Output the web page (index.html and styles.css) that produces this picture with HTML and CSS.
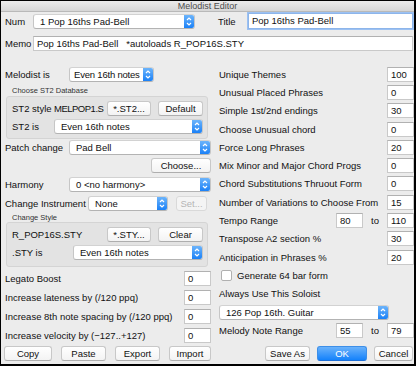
FILE: index.html
```html
<!DOCTYPE html>
<html>
<head>
  <meta charset="UTF-8">
  <title>Melodist Editor</title>
  <link rel="stylesheet" href="styles.css">
</head>
<body>
  <div class="window">
    <div class="titlebar">Melodist Editor</div>
    <div class="content">
      <div class="top-row">
        <span class="label label-num">Num</span>
        <div class="popup popup-num">
          <span class="popup-text">1 Pop 16ths Pad-Bell</span>
          <span class="popup-arrow"><svg width="10" height="13" viewBox="0 0 10 13"><path d="M3 5 L5 3 L7 5 M3 8 L5 10 L7 8" fill="none" stroke="#fff" stroke-width="1.2"/></svg></span>
        </div>
        <span class="label label-title">Title</span>
        <div class="field field-title focused">Pop 16ths Pad-Bell</div>
      </div>
      <div class="memo-row">
        <span class="label label-num">Memo</span>
        <div class="field field-memo">Pop 16ths Pad-Bell&nbsp;&nbsp;&nbsp;*autoloads R_POP16S.STY</div>
      </div>

      <div class="columns">
        <div class="col-left">
          <div class="row row-18">
            <span class="label label-left">Melodist is</span>
            <div class="popup popup-melodist">
              <span class="popup-text">Even 16th notes</span>
              <span class="popup-arrow"><svg width="10" height="13" viewBox="0 0 10 13"><path d="M3 5 L5 3 L7 5 M3 8 L5 10 L7 8" fill="none" stroke="#fff" stroke-width="1.2"/></svg></span>
            </div>
          </div>

          <div class="group-label group-label-first">Choose ST2 Database</div>
          <div class="group group-st2">
            <div class="row row-18">
              <span class="label label-group">ST2 style</span>
              <span class="label value-st2">MELPOP1.S</span>
              <div class="button btn-browse">*.ST2...</div>
              <div class="button btn-default">Default</div>
            </div>
            <div class="row row-18">
              <span class="label label-group">ST2 is</span>
              <div class="popup popup-fill">
                <span class="popup-text">Even 16th notes</span>
                <span class="popup-arrow"><svg width="10" height="13" viewBox="0 0 10 13"><path d="M3 5 L5 3 L7 5 M3 8 L5 10 L7 8" fill="none" stroke="#fff" stroke-width="1.2"/></svg></span>
              </div>
            </div>
          </div>

          <div class="row row-18">
            <span class="label label-left">Patch change</span>
            <div class="popup popup-fill">
              <span class="popup-text">Pad Bell</span>
              <span class="popup-arrow"><svg width="10" height="13" viewBox="0 0 10 13"><path d="M3 5 L5 3 L7 5 M3 8 L5 10 L7 8" fill="none" stroke="#fff" stroke-width="1.2"/></svg></span>
            </div>
          </div>
          <div class="row row-18 row-end">
            <div class="button btn-choose">Choose...</div>
          </div>
          <div class="row row-19">
            <span class="label label-left">Harmony</span>
            <div class="popup popup-fill">
              <span class="popup-text">0 &lt;no harmony&gt;</span>
              <span class="popup-arrow"><svg width="10" height="13" viewBox="0 0 10 13"><path d="M3 5 L5 3 L7 5 M3 8 L5 10 L7 8" fill="none" stroke="#fff" stroke-width="1.2"/></svg></span>
            </div>
          </div>
          <div class="row row-19">
            <span class="label label-instrument">Change Instrument</span>
            <div class="popup popup-instrument">
              <span class="popup-text">None</span>
              <span class="popup-arrow"><svg width="10" height="13" viewBox="0 0 10 13"><path d="M3 5 L5 3 L7 5 M3 8 L5 10 L7 8" fill="none" stroke="#fff" stroke-width="1.2"/></svg></span>
            </div>
            <div class="button btn-set disabled">Set...</div>
          </div>

          <div class="group-label group-label-second">Change Style</div>
          <div class="group group-style">
            <div class="row row-18">
              <span class="label value-style">R_POP16S.STY</span>
              <div class="button btn-browse">*.STY...</div>
              <div class="button btn-default">Clear</div>
            </div>
            <div class="row row-18">
              <span class="label label-sty">.STY is</span>
              <div class="popup popup-fill">
                <span class="popup-text">Even 16th notes</span>
                <span class="popup-arrow"><svg width="10" height="13" viewBox="0 0 10 13"><path d="M3 5 L5 3 L7 5 M3 8 L5 10 L7 8" fill="none" stroke="#fff" stroke-width="1.2"/></svg></span>
              </div>
            </div>
          </div>

          <div class="row row-19 row-after-group">
            <span class="label label-grow">Legato Boost</span>
            <div class="field field-num">0</div>
          </div>
          <div class="row row-19">
            <span class="label label-grow">Increase lateness by (/120 ppq)</span>
            <div class="field field-num">0</div>
          </div>
          <div class="row row-19">
            <span class="label label-grow">Increase 8th note spacing by (/120 ppq)</span>
            <div class="field field-num">0</div>
          </div>
          <div class="row row-19">
            <span class="label label-grow">Increase velocity by (−127..+127)</span>
            <div class="field field-num">0</div>
          </div>
        </div>

        <div class="col-right">
          <div class="row row-r"><span class="label label-grow">Unique Themes</span><div class="field field-num">100</div></div>
          <div class="row row-r"><span class="label label-grow">Unusual Placed Phrases</span><div class="field field-num">0</div></div>
          <div class="row row-r"><span class="label label-grow">Simple 1st/2nd endings</span><div class="field field-num">30</div></div>
          <div class="row row-r"><span class="label label-grow">Choose Unusual chord</span><div class="field field-num">0</div></div>
          <div class="row row-r"><span class="label label-grow">Force Long Phrases</span><div class="field field-num">20</div></div>
          <div class="row row-r"><span class="label label-grow">Mix Minor and Major Chord Progs</span><div class="field field-num">0</div></div>
          <div class="row row-r"><span class="label label-grow">Chord Substitutions Thruout Form</span><div class="field field-num">0</div></div>
          <div class="row row-r"><span class="label label-grow">Number of Variations to Choose From</span><div class="field field-num">15</div></div>
          <div class="row row-r">
            <span class="label label-grow">Tempo Range</span>
            <div class="field field-num">80</div>
            <span class="label label-to">to</span>
            <div class="field field-num">110</div>
          </div>
          <div class="row row-r"><span class="label label-grow">Transpose A2 section %</span><div class="field field-num">30</div></div>
          <div class="row row-r"><span class="label label-grow">Anticipation in Phrases %</span><div class="field field-num">20</div></div>
          <div class="row row-r">
            <span class="checkbox"></span>
            <span class="label">Generate 64 bar form</span>
          </div>
          <div class="row row-r"><span class="label label-grow">Always Use This Soloist</span></div>
          <div class="row row-r">
            <div class="popup popup-soloist">
              <span class="popup-text">126 Pop 16th. Guitar</span>
              <span class="popup-arrow"><svg width="10" height="13" viewBox="0 0 10 13"><path d="M3 5 L5 3 L7 5 M3 8 L5 10 L7 8" fill="none" stroke="#fff" stroke-width="1.2"/></svg></span>
            </div>
          </div>
          <div class="row row-r">
            <span class="label label-grow">Melody Note Range</span>
            <div class="field field-num">55</div>
            <span class="label label-to">to</span>
            <div class="field field-num">79</div>
          </div>
        </div>
      </div>

      <div class="bottom-row">
        <div class="button btn-copy">Copy</div>
        <div class="button btn-paste">Paste</div>
        <div class="button btn-export">Export</div>
        <div class="button btn-import">Import</div>
        <div class="spacer"></div>
        <div class="button btn-saveas">Save As</div>
        <div class="button btn-ok primary">OK</div>
        <div class="button btn-cancel">Cancel</div>
      </div>
    </div>
  </div>
</body>
</html>
```

FILE: styles.css
```css
body {
  margin: 0;
  background-color: #000;
  font-family: "Liberation Sans", Arial, sans-serif;
  font-size: 9.5px;
  color: #111;
}

.window {
  width: 413px;
  height: 363px;
  margin: 1px 2px 2px 1px;
  background-color: #ececec;
  overflow: hidden;
}

.titlebar {
  height: 10px;
  line-height: 10px;
  text-align: center;
  font-size: 9px;
  color: #4d4d4d;
  background: linear-gradient(#ebebeb, #d6d6d6);
  border-bottom: 1px solid #b9b9b9;
}

.content {
  padding: 1px 0 0 4px;
}

.top-row,
.memo-row,
.row,
.bottom-row {
  display: flex;
  align-items: center;
}

.top-row {
  height: 16px;
}

.memo-row {
  height: 16px;
  margin-top: 6px;
}

.label {
  white-space: nowrap;
  flex-shrink: 0;
}

.label-num {
  width: 28px;
}

.label-title {
  width: 30px;
  margin-left: 23px;
}

/* popups */
.popup {
  display: flex;
  align-items: center;
  height: 13px;
  background-color: #fff;
  border: 1px solid #c6c6c6;
  border-top-color: #d2d2d2;
  border-bottom-color: #b3b3b3;
  border-radius: 3px;
  box-sizing: content-box;
  flex-shrink: 0;
}

.popup-text {
  flex: 1;
  padding-left: 6px;
  white-space: nowrap;
  overflow: hidden;
}

.popup-melodist .popup-text {
  padding-left: 4px;
  letter-spacing: -0.2px;
}

.popup-arrow {
  display: flex;
  width: 10px;
  height: 13px;
  background: linear-gradient(#6cb4fb, #1b81f7);
  border-radius: 0 2px 2px 0;
}

.popup-num {
  width: 160px;
}

.popup-melodist {
  width: 83px;
}

.popup-fill {
  flex: 1;
  flex-shrink: 1;
}

.popup-instrument {
  width: 78px;
}

.popup-soloist {
  width: 168px;
}

/* text fields */
.field {
  height: 14px;
  line-height: 14px;
  background-color: #fff;
  border: 1px solid #c9c9c9;
  border-top-color: #b1b1b1;
  padding-left: 3px;
  box-sizing: border-box;
  white-space: nowrap;
  overflow: hidden;
  flex-shrink: 0;
}

.field-title {
  flex: 1;
  height: 16px;
  line-height: 14px;
  margin-right: 1px;
}

.focused {
  border-color: #8db5ea;
  box-shadow: 0 0 0 1px #9cc1f2;
}

.field-memo {
  flex: 1;
  height: 15px;
  margin-right: 1px;
}

.field-num {
  width: 27px;
  height: 15px;
}

/* buttons */
.button {
  height: 15px;
  line-height: 13px;
  text-align: center;
  background: linear-gradient(#ffffff, #f3f3f3);
  border: 1px solid #c8c8c8;
  border-bottom-color: #aeaeae;
  border-radius: 3px;
  box-sizing: border-box;
  white-space: nowrap;
  flex-shrink: 0;
}

.button.disabled {
  color: #b5b5b5;
  background: #f4f4f4;
  border-color: #d9d9d9;
}

.button.primary {
  color: #fff;
  background: linear-gradient(#6ab2fb, #1482fb);
  border-color: #3d8fe8;
  border-bottom-color: #1d6fd8;
}

/* columns */
.columns {
  display: flex;
  margin-top: 14px;
}

.col-left {
  width: 206px;
}

.col-right {
  width: 195px;
  margin-left: 8px;
}

.row-18 {
  height: 18px;
}

.row-19 {
  height: 19px;
}

.row-r {
  height: 18.3px;
}

.row-end {
  justify-content: flex-end;
}

.label-left {
  width: 64px;
}

.label-instrument {
  width: 83px;
}

.label-grow {
  flex: 1;
}

.label-to {
  width: 24px;
  text-align: center;
}

.group-label {
  font-size: 7.5px;
  color: #333;
  padding-left: 7px;
}

.group-label-first {
  height: 12.5px;
  line-height: 15px;
}

.group-label-second {
  height: 9px;
  line-height: 9px;
}

.group {
  width: 202px;
  margin-left: 1px;
  background-color: #e3e3e3;
  border: 1px solid #d4d4d4;
  border-radius: 3px;
  box-sizing: border-box;
  padding: 3px 4px 2px 5px;
}

.group-style {
  padding-bottom: 4px;
}

.label-group {
  width: 42px;
}

.value-st2 {
  width: 53px;
  letter-spacing: -0.5px;
  overflow: hidden;
}

.value-style {
  width: 95px;
}

.label-sty {
  width: 61px;
}

.btn-browse {
  width: 44px;
}

.btn-default {
  width: 45px;
  margin-left: 7px;
}

.btn-choose {
  width: 60px;
}

.btn-set {
  width: 31px;
  margin-left: 8px;
  margin-right: 1px;
}

.row-after-group {
  margin-top: 2px;
}

.checkbox {
  width: 9px;
  height: 9px;
  margin: 0 5px 0 2px;
  background-color: #fff;
  border: 1px solid #b0b0b0;
  border-radius: 2px;
}

/* bottom buttons */
.bottom-row {
  height: 16px;
  margin-top: 1px;
  gap: 9px;
  padding-right: 1px;
}

.spacer {
  flex: 1;
}

.btn-copy {
  width: 48px;
  margin-left: -1px;
}

.btn-paste {
  width: 45px;
}

.btn-export {
  width: 45px;
}

.btn-import {
  width: 42px;
}

.btn-saveas {
  width: 45px;
}

.btn-ok {
  width: 50px;
  margin-left: -2px;
}

.btn-cancel {
  width: 39px;
  margin-left: -2px;
}
```
